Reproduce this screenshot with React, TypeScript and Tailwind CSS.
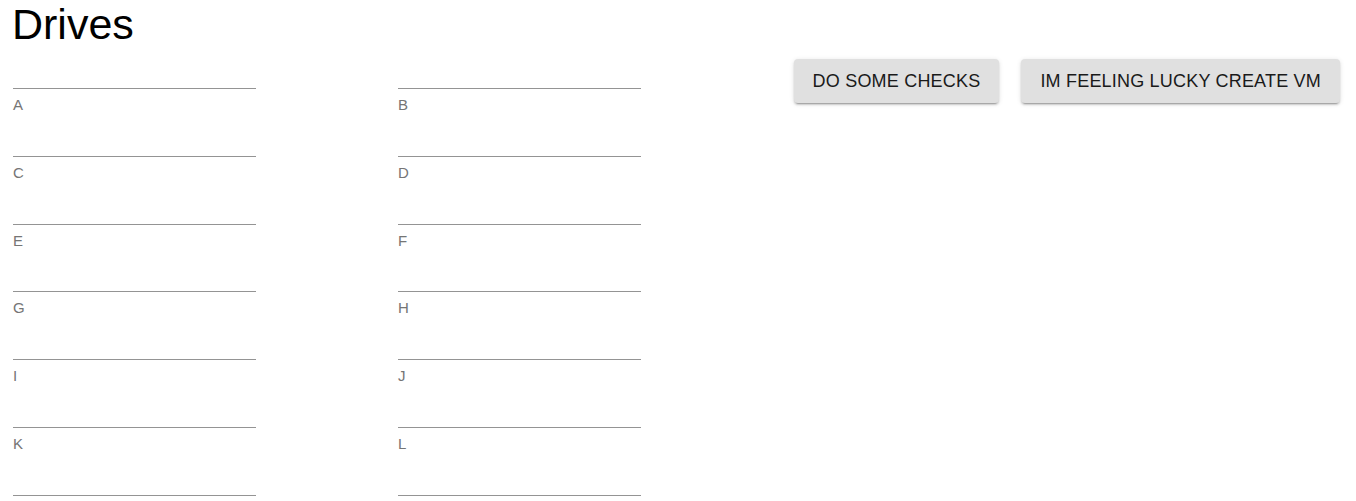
const LEFT = ['A', 'C', 'E', 'G', 'I', 'K'];
const RIGHT = ['B', 'D', 'F', 'H', 'J', 'L'];

function DriveColumn({ letters }: { letters: string[] }) {
  return (
    <div className="w-[243px] flex flex-col">
      {letters.map((letter) => (
        <div key={letter} className="h-[67.83px] border-t border-[#949494]">
          <p className="mt-[8px] text-[15px] leading-4 text-[#757575]">{letter}</p>
        </div>
      ))}
      <div className="border-t border-[#949494]" />
    </div>
  );
}

export default function App() {
  return (
    <main
      className="min-h-screen bg-white text-black"
      style={{ fontFamily: '"Liberation Sans", Arial, sans-serif' }}
    >
      <h1 className="pl-[12px] text-[43px] leading-[42px] pt-[3px] font-normal">Drives</h1>

      <div className="flex pl-[13px] pr-4">
        <div className="pt-[43px] flex gap-[142px]">
          <DriveColumn letters={LEFT} />
          <DriveColumn letters={RIGHT} />
        </div>

        <div className="ml-auto pt-[14px] flex items-start gap-[22px]">
          <button className="h-[44px] px-[19px] rounded bg-[#e0e0e0] text-[18px] tracking-[0.2px] text-[#1a1a1a] uppercase shadow-[0px_3px_1px_-2px_rgba(0,0,0,0.2),0px_2px_2px_0px_rgba(0,0,0,0.14),0px_1px_5px_0px_rgba(0,0,0,0.12)]">
            Do some checks
          </button>
          <button className="h-[44px] px-[19px] rounded bg-[#e0e0e0] text-[18px] tracking-[0.2px] text-[#1a1a1a] uppercase shadow-[0px_3px_1px_-2px_rgba(0,0,0,0.2),0px_2px_2px_0px_rgba(0,0,0,0.14),0px_1px_5px_0px_rgba(0,0,0,0.12)]">
            Im feeling lucky create VM
          </button>
        </div>
      </div>
    </main>
  );
}
